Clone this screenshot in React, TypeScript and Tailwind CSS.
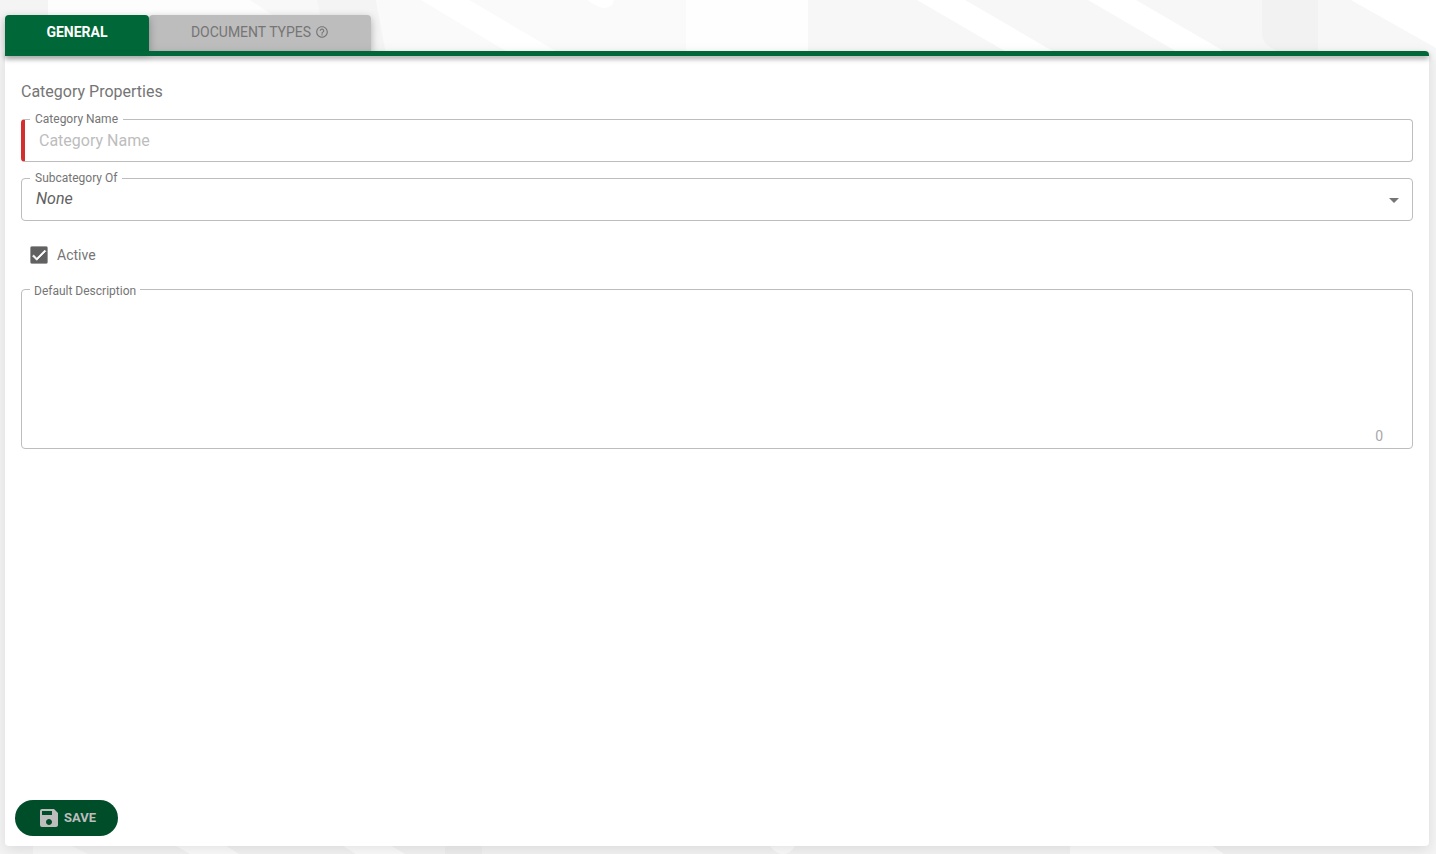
import { useState } from 'react'
import { MdArrowDropDown, MdCheck, MdHelpOutline, MdSave } from 'react-icons/md'

type Tab = 'general' | 'types'

function Backdrop() {
  return (
    <svg
      aria-hidden="true"
      className="absolute inset-0 -z-10 h-full w-full"
      viewBox="0 0 1436 854"
      preserveAspectRatio="none"
    >
      <rect width="1436" height="854" fill="#f4f4f4" />
      <rect x="48" width="330" height="60" fill="#fdfdfd" />
      <path d="M250 0H317L335 60H340Z" fill="#f8f8f8" />
      <path d="M317 0H376L387 60H330Z" fill="#f4f4f4" />
      <path d="M376 0H686V60H387Z" fill="#fafafa" />
      <path d="M421 0H469L571 60H521ZM587 0H614Q612 8 604 8Q599 8 587 0Z" fill="#fff" />
      <rect x="686" width="122" height="60" fill="#fefefe" />
      <rect x="808" width="628" height="60" fill="#f7f7f7" />
      <path d="M917 0H965L1068 60H1020ZM1088 0H1136L1239 60H1191ZM1351 0H1436V48Z" fill="#fff" />
      <path d="M1262 0H1318V60H1292L1270 47Q1262 42 1262 34Z" fill="#f2f2f2" />
      <path d="M33 840H60L88 854H33Z" fill="#fafafa" />
      <path d="M173 844H223L239 854H190ZM340 844H388L405 854H356ZM770 846H795Q790 854 783 854Q776 854 770 846Z" fill="#fcfcfc" />
      <rect x="445" y="840" width="37" height="14" fill="#efefef" />
      <path d="M1070 840H1204L1224 854H1070Z" fill="#fdfdfd" />
    </svg>
  )
}

export default function App() {
  const [tab, setTab] = useState<Tab>('general')
  const [name, setName] = useState('')
  const [active, setActive] = useState(true)
  const [description, setDescription] = useState('')

  return (
    <div className="relative isolate flex min-h-screen flex-col overflow-hidden pt-[15px] pr-[7px] pb-2 pl-[5px] font-[Roboto,sans-serif] text-[#757575]">
      <Backdrop />

      <div role="tablist" className="flex h-9">
        <button
          role="tab"
          aria-selected={tab === 'general'}
          onClick={() => setTab('general')}
          className="z-10 w-36 rounded-t bg-[#006838] pb-0.5 text-sm font-bold text-white shadow-[0_3px_8px_rgba(0,0,0,0.3)]"
        >
          GENERAL
        </button>
        <button
          role="tab"
          aria-selected={tab === 'types'}
          onClick={() => setTab('types')}
          className="flex w-[222px] items-center justify-center gap-1 rounded-t bg-[#bdbdbd] pb-0.5 text-sm shadow-[0_3px_8px_rgba(0,0,0,0.3)]"
        >
          DOCUMENT TYPES
          <MdHelpOutline className="size-3.5" />
        </button>
      </div>

      <form
        onSubmit={e => e.preventDefault()}
        className="flex grow flex-col rounded bg-white shadow-[0_4px_14px_rgba(0,0,0,0.1)]"
      >
        <div className="z-20 h-[5px] rounded-tr bg-[#006838] shadow-[0_3px_5px_rgba(0,0,0,0.35)]" />

        <div className="flex grow flex-col px-4 pt-6">
          <h1 className="text-base leading-6">Category Properties</h1>

          <fieldset className="mt-[7px] rounded border border-l-4 border-[#bdbdbd] border-l-[#d32f2f] pb-2">
            <legend className="ml-[5px] px-[5px] text-xs leading-4">
              <label htmlFor="name">Category Name</label>
            </legend>
            <input
              id="name"
              required
              value={name}
              onChange={e => setName(e.target.value)}
              placeholder="Category Name"
              className="block h-[26px] w-full px-3.5 text-base text-[#616161] outline-none placeholder:text-[#bdbdbd]"
            />
          </fieldset>

          <fieldset className="relative mt-2 rounded border border-[#bdbdbd] pb-2">
            <legend className="ml-2 px-[5px] text-xs leading-4">
              <label htmlFor="parent">Subcategory Of</label>
            </legend>
            <select
              id="parent"
              className="block h-[26px] w-full appearance-none pr-10 pl-3.5 text-base text-[#616161] italic outline-none"
            >
              <option>None</option>
            </select>
            <MdArrowDropDown className="pointer-events-none absolute right-1.5 bottom-2 size-6" />
          </fieldset>

          <label className="mt-6 ml-[9px] flex items-center gap-[9px] self-start text-sm leading-5">
            <span className="relative flex size-[18px]">
              <input
                type="checkbox"
                checked={active}
                onChange={e => setActive(e.target.checked)}
                className="size-full appearance-none rounded-xs border-2 border-[#616161] checked:bg-[#616161]"
              />
              {active && (
                <MdCheck className="pointer-events-none absolute inset-0 size-[18px] stroke-white stroke-1 text-white" />
              )}
            </span>
            Active
          </label>

          <fieldset className="relative mt-3.5 rounded border border-[#bdbdbd]">
            <legend className="ml-2 px-1 pt-1 text-xs leading-4">
              <label htmlFor="description">Default Description</label>
            </legend>
            <textarea
              id="description"
              rows={6}
              value={description}
              onChange={e => setDescription(e.target.value)}
              className="block h-[149px] w-full resize-none px-3.5 text-base text-[#616161] outline-none"
            />
            <span className="absolute right-[29px] bottom-0.5 text-sm text-[#a8a8a8]">{description.length}</span>
          </fieldset>
        </div>

        <div className="p-2.5">
          <button
            type="submit"
            className="flex h-9 items-center gap-[3px] rounded-full bg-[#004d29] px-[22px] text-[13px] font-bold text-[#bdbdbd]"
          >
            <MdSave className="size-6" />
            SAVE
          </button>
        </div>
      </form>
    </div>
  )
}
